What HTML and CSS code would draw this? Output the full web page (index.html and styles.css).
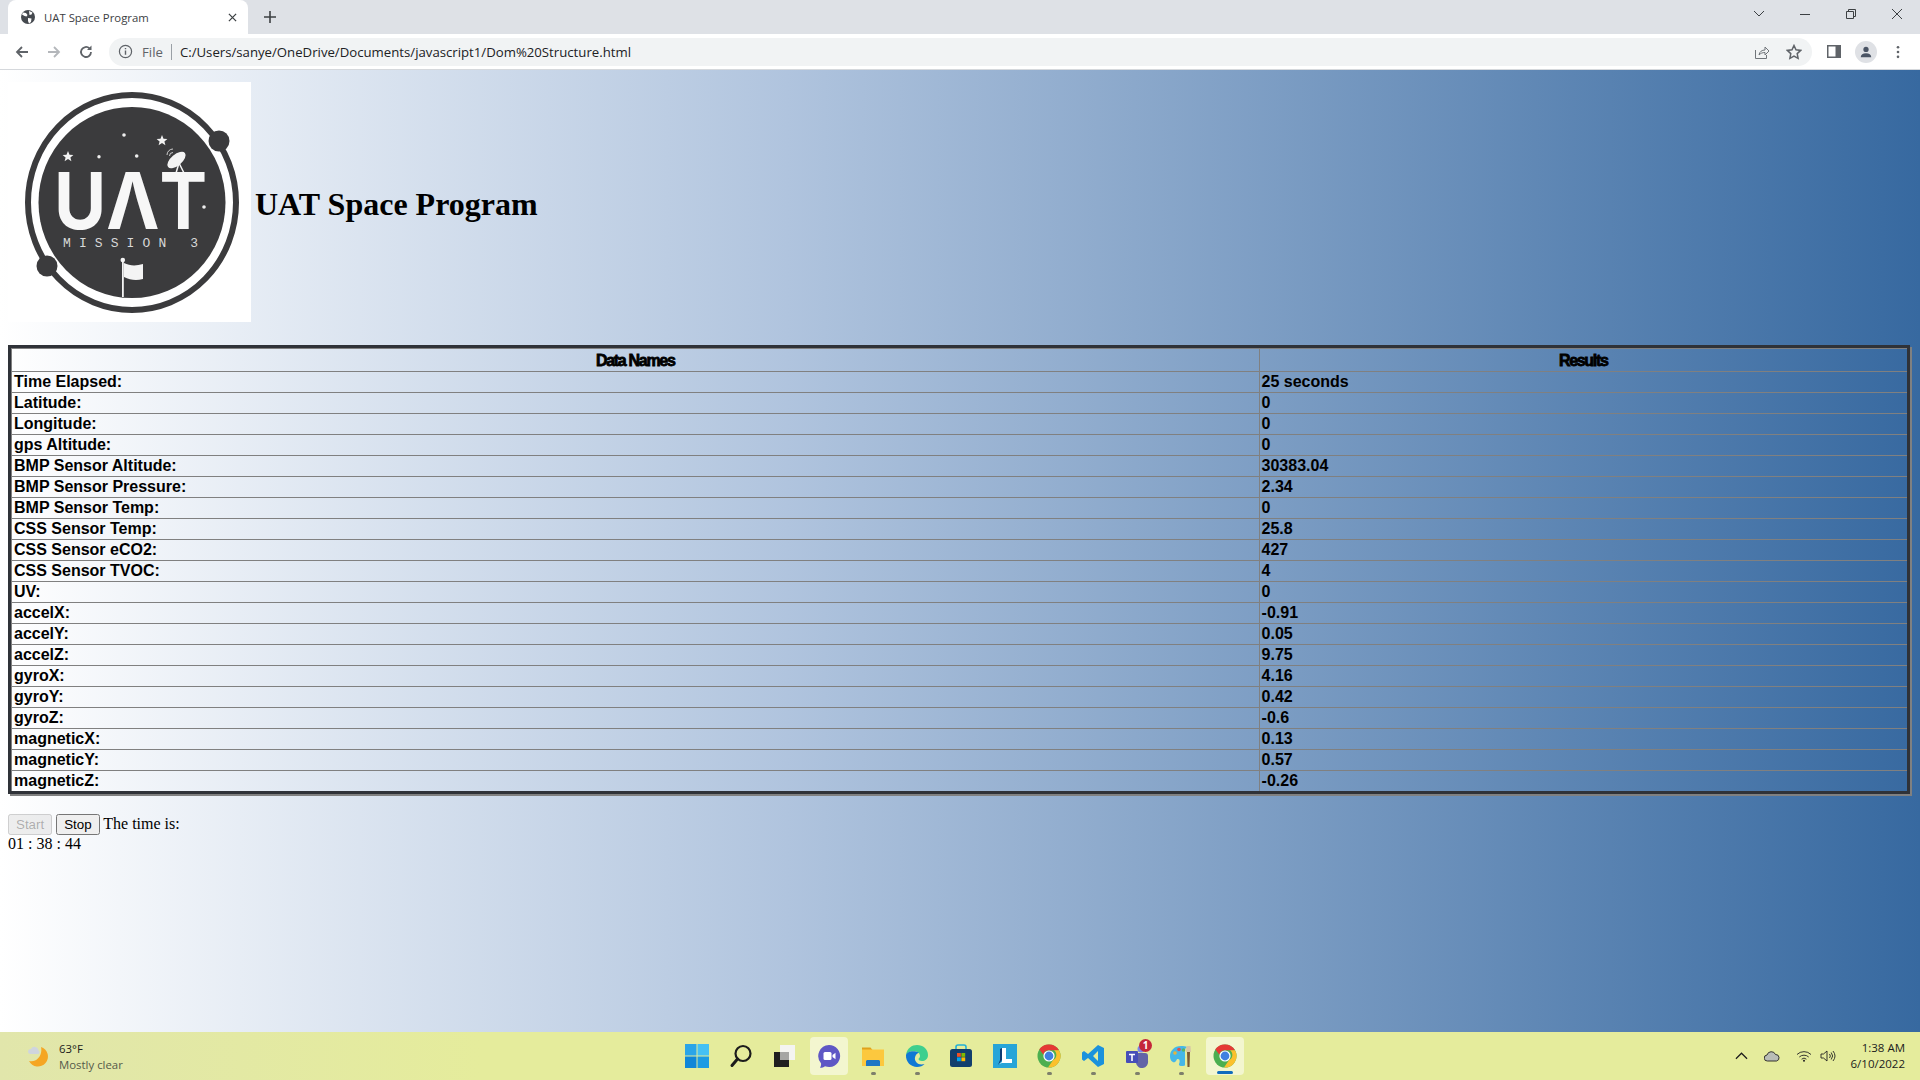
FILE: index.html
```html
<!DOCTYPE html>
<html lang="en">
<head>
<meta charset="utf-8">
<title>UAT Space Program</title>
<link rel="stylesheet" href="styles.css">
</head>
<body>
<svg class="defs" width="0" height="0" aria-hidden="true">
  <symbol id="chrome" viewBox="0 0 24 24">
    <circle cx="12" cy="12" r="11.5" fill="#4caf50"/>
    <path d="M12 .5a11.5 11.5 0 0 1 10 5.75H12a5.75 5.75 0 0 0-5.6 4.4L2.3 5.2A11.5 11.5 0 0 1 12 .5z" fill="#e53935"/>
    <path d="M22 6.25A11.5 11.5 0 0 1 11 23.45l5.1-7.4a5.75 5.75 0 0 0 .9-9.8z" fill="#fbc02d"/>
    <circle cx="12" cy="12" r="5.6" fill="#fff"/>
    <circle cx="12" cy="12" r="4.4" fill="#3f80e0"/>
  </symbol>
</svg>

<header class="chrome">
  <div class="tabstrip">
    <div class="tab">
      <svg class="favicon" viewBox="0 0 16 16"><circle cx="8" cy="8" r="7" fill="#45494f"/><path d="M3 3.5l3 .5 1.500 2-1 1.500-2-.5-2.500-1.500zM9 2l3.500 1.500-1 2L9.500 6zM8 9l3.500.5L11 13l-2 1.500-1-2.500z" fill="#fff"/></svg>
      <span class="tab-title">UAT Space Program</span>
      <svg class="tab-close" viewBox="0 0 10 10"><path d="M1 1l8 8M9 1l-8 8" stroke="#3c4043" stroke-width="1.400"/></svg>
    </div>
    <svg class="newtab" viewBox="0 0 12 12"><path d="M6 0v12M0 6h12" stroke="#3c4043" stroke-width="1.600"/></svg>
    <div class="winctl">
      <svg class="wc" viewBox="0 0 46 20"><path d="M18 7l5 5 5-5" fill="none" stroke="#3c4043"/></svg>
      <svg class="wc" viewBox="0 0 46 20"><path d="M18 10.500h10" stroke="#3c4043"/></svg>
      <svg class="wc" viewBox="0 0 46 20"><path d="M18.500 7.500h7v7h-7zM20.500 7.500v-2h7v7h-2" fill="none" stroke="#3c4043"/></svg>
      <svg class="wc" viewBox="0 0 46 20"><path d="M18 5l10 10M28 5L18 15" stroke="#3c4043"/></svg>
    </div>
  </div>
  <div class="toolbar">
    <svg class="navbtn" viewBox="0 0 16 16"><path d="M14 8H3M8 3L3 8l5 5" fill="none" stroke="#5f6368" stroke-width="1.800"/></svg>
    <svg class="navbtn" viewBox="0 0 16 16"><path d="M2 8h11M8 3l5 5-5 5" fill="none" stroke="#b4b7bb" stroke-width="1.800"/></svg>
    <svg class="navbtn" viewBox="0 0 16 16"><path d="M13 8a5 5 0 1 1-1.500-3.600" fill="none" stroke="#5f6368" stroke-width="1.800"/><path d="M13.500 1.500v4.500H9z" fill="#5f6368"/></svg>
    <div class="omnibox">
      <svg class="info" viewBox="0 0 16 16"><circle cx="8" cy="8" r="6.500" fill="none" stroke="#5f6368" stroke-width="1.300"/><path d="M8 7v4.500M8 4.200v1.500" stroke="#5f6368" stroke-width="1.500"/></svg>
      <span class="scheme">File</span>
      <span class="sep"></span>
      <span class="url">C:/Users/sanye/OneDrive/Documents/javascript1/Dom%20Structure.html</span>
      <svg class="omni-ic share" viewBox="0 0 16 16"><path d="M1.500 6v8.500h11V11" fill="none" stroke="#70757a"/><path d="M5 11c.5-3.500 3-5 6-5V3l4 4-4 4V8.500c-2.500 0-4.500.8-6 2.500z" fill="none" stroke="#70757a"/></svg>
      <svg class="omni-ic" viewBox="0 0 16 16"><path d="M8 1.500l2 4.300 4.700.6-3.500 3.200.9 4.700L8 12l-4.100 2.300.9-4.700L1.300 6.400 6 5.800z" fill="none" stroke="#5f6368" stroke-width="1.500"/></svg>
    </div>
    <svg class="panel" viewBox="0 0 14 13"><rect width="14" height="13" fill="#5f6368"/><rect x="1.500" y="1.500" width="7" height="10" fill="#fff"/></svg>
    <div class="avatar"><svg viewBox="0 0 16 16"><circle cx="8" cy="5" r="3" fill="#4a5464"/><path d="M2 14c0-3 2.500-4.500 6-4.500s6 1.500 6 4.500z" fill="#4a5464"/></svg></div>
    <svg class="dots" viewBox="0 0 4 16"><circle cx="2" cy="2.500" r="1.500" fill="#5f6368"/><circle cx="2" cy="8" r="1.500" fill="#5f6368"/><circle cx="2" cy="13.500" r="1.500" fill="#5f6368"/></svg>
  </div>
</header>

<main class="page">
  <div class="masthead">
    <svg class="logo" viewBox="0 0 243 240" role="img" aria-label="UAT Mission 3 logo">
      <rect width="243" height="240" fill="#fff"/>
      <ellipse cx="124" cy="120.500" rx="104" ry="107.500" fill="none" stroke="#3b3b3d" stroke-width="6"/>
      <ellipse cx="124" cy="120.500" rx="93.500" ry="95.500" fill="#3b3b3d"/>
      <circle cx="211" cy="59" r="10.500" fill="#3b3b3d"/>
      <circle cx="39" cy="184" r="10.500" fill="#3b3b3d"/>
      <path d="M60 69l1.500 3.700 3.900.2-3 2.500 1 3.800-3.400-2.100-3.400 2.100 1-3.800-3-2.500 3.900-.2zM154 53l1.500 3.700 3.900.2-3 2.500 1 3.800-3.400-2.100-3.400 2.100 1-3.800-3-2.500 3.900-.2z" fill="#f2f2f2"/>
      <circle cx="116" cy="53" r="1.800" fill="#eee"/><circle cx="91" cy="74.700" r="1.700" fill="#eee"/><circle cx="128.700" cy="74" r="1.800" fill="#eee"/><circle cx="196" cy="125" r="1.800" fill="#eee"/>
      <ellipse cx="168.500" cy="78" rx="11" ry="5.500" transform="rotate(-40 168.500 78)" fill="#f4f4f4"/>
      <path d="M171 81l-3 10M171 81l5 10" fill="none" stroke="#f4f4f4" stroke-width="1.500"/>
      <path d="M159 73a6 6 0 0 1 6-6M161.500 74a3.500 3.500 0 0 1 3.500-3.500" fill="none" stroke="#ddd" stroke-width=".9"/>
      <text class="logo-mark" x="46" y="147" textLength="153" lengthAdjust="spacingAndGlyphs">UΛT</text>
      <text class="logo-sub" x="55" y="164.500" textLength="135">MISSION 3</text>
      <path d="M114 178h1.800v37H114z" fill="#f4f4f4"/>
      <circle cx="114.800" cy="178" r="2.300" fill="#f4f4f4"/>
      <path d="M116 181c6 3 12 3 19 1v15c-7 2-13 1-19-2z" fill="#f4f4f4"/>
    </svg>
    <h1 class="title">UAT Space Program</h1>
  </div>

  <div class="table-wrap">
    <table class="data">
      <thead>
        <tr><th class="col-name">Data Names</th><th>Results</th></tr>
      </thead>
      <tbody>
        <tr><td>Time Elapsed:</td><td>25 seconds</td></tr>
        <tr><td>Latitude:</td><td>0</td></tr>
        <tr><td>Longitude:</td><td>0</td></tr>
        <tr><td>gps Altitude:</td><td>0</td></tr>
        <tr><td>BMP Sensor Altitude:</td><td>30383.04</td></tr>
        <tr><td>BMP Sensor Pressure:</td><td>2.34</td></tr>
        <tr><td>BMP Sensor Temp:</td><td>0</td></tr>
        <tr><td>CSS Sensor Temp:</td><td>25.8</td></tr>
        <tr><td>CSS Sensor eCO2:</td><td>427</td></tr>
        <tr><td>CSS Sensor TVOC:</td><td>4</td></tr>
        <tr><td>UV:</td><td>0</td></tr>
        <tr><td>accelX:</td><td>-0.91</td></tr>
        <tr><td>accelY:</td><td>0.05</td></tr>
        <tr><td>accelZ:</td><td>9.75</td></tr>
        <tr><td>gyroX:</td><td>4.16</td></tr>
        <tr><td>gyroY:</td><td>0.42</td></tr>
        <tr><td>gyroZ:</td><td>-0.6</td></tr>
        <tr><td>magneticX:</td><td>0.13</td></tr>
        <tr><td>magneticY:</td><td>0.57</td></tr>
        <tr><td>magneticZ:</td><td>-0.26</td></tr>
      </tbody>
    </table>
  </div>

  <div class="clock">
    <div class="clock-row"><button disabled>Start</button> <button>Stop</button> The time is:</div>
    <div>01 : 38 : 44</div>
  </div>
</main>

<footer class="taskbar">
  <div class="weather">
    <svg class="moon" viewBox="0 0 24 24">
      <path d="M14 3a10 10 0 1 1-12 14c7 2 14-5 12-14z" fill="#f5a623"/>
      <path d="M1 8a3 3 0 0 1 3-3 4 4 0 0 1 7.500 1.500 2 2 0 0 1 0 3.500H3a2.500 2.500 0 0 1-2-2z" fill="#cfd5de"/>
    </svg>
    <div class="weather-text"><span class="temp">63°F</span><span class="cond">Mostly clear</span></div>
  </div>
  <div class="apps">
    <div class="app"><svg viewBox="0 0 24 24"><rect x="0" y="0" width="11.500" height="11.500" fill="#2aa5e8"/><rect x="12.500" y="0" width="11.500" height="11.500" fill="#45c1f4"/><rect x="0" y="12.500" width="11.500" height="11.500" fill="#0f86d8"/><rect x="12.500" y="12.500" width="11.500" height="11.500" fill="#1c9be3"/></svg></div>
    <div class="app"><svg viewBox="0 0 24 24"><circle cx="14" cy="9.500" r="7.500" fill="none" stroke="#1c1c1c" stroke-width="2.200"/><path d="M8.500 15L3 21.500" stroke="#1c1c1c" stroke-width="3" stroke-linecap="round"/></svg></div>
    <div class="app"><svg viewBox="0 0 24 24"><rect x="7" y="1" width="15" height="15" fill="#f4f4f0"/><rect x="1" y="8" width="15" height="15" fill="#1f1f1f"/><rect x="7" y="8" width="9" height="8" fill="#a5a5a3"/></svg></div>
    <div class="app app-on"><svg viewBox="0 0 24 24"><path d="M12 1a11 11 0 1 1-4 21.200c-1.500 1-3 1.500-5 1.500 1-1.500 1.300-3 1-4.500A11 11 0 0 1 12 1z" fill="#5f57c5"/><rect x="6.500" y="8" width="8" height="8" rx="1.500" fill="#fff"/><path d="M15.500 11l3-2.200v6.400l-3-2.200z" fill="#fff"/></svg></div>
    <div class="app running"><svg viewBox="0 0 24 24"><path d="M1 3.500h8.500l2 2.500H1z" fill="#e0a21c"/><path d="M1 5.500h22V22H1z" fill="#fcc83e"/><path d="M6 16h12l1 1v5H5v-5z" fill="#1d76c4"/></svg></div>
    <div class="app running"><svg viewBox="0 0 24 24"><path d="M1 11C2 4 7 1 12 1c6 0 11 4 11 10 0 4-3 6-6 6-2 0-3.500-1-3.500-2 0-1 1.500-1 1.500-3 0-3-3-5-6.500-5S2 9 1 11z" fill="#3ecf8e"/><path d="M1 11c-.5 7 5 12 11 12 3 0 6-1 7.500-3-3 1-7.500.5-9-3-1.500-3 0-7 3.500-8.500C9 6 2 7 1 11z" fill="#0f78d4"/></svg></div>
    <div class="app"><svg viewBox="0 0 24 24"><path d="M7 6V3a2 2 0 0 1 2-2h6a2 2 0 0 1 2 2v3" fill="none" stroke="#23b0d6" stroke-width="1.600"/><rect x="1" y="5" width="22" height="18" rx="2.500" fill="#123f6d"/><rect x="8" y="9" width="3.800" height="3.800" fill="#f25022"/><rect x="12.400" y="9" width="3.800" height="3.800" fill="#7fba00"/><rect x="8" y="13.400" width="3.800" height="3.800" fill="#00a4ef"/><rect x="12.400" y="13.400" width="3.800" height="3.800" fill="#ffb900"/></svg></div>
    <div class="app"><svg viewBox="0 0 24 24"><rect width="24" height="24" fill="#27a5d8"/><path d="M6 20l3-2V4h4v11h6v4H9z" fill="#fff"/><path d="M5 21l4-5V4L7 5v11z" fill="#0f3c74"/></svg></div>
    <div class="app running"><svg viewBox="0 0 24 24"><use href="#chrome"/></svg></div>
    <div class="app running"><svg viewBox="0 0 24 24"><path d="M17 1l6 3v16l-6 3L7 14l-4 3-2-1.500v-7L3 7l4 3zM17 7l-5 5 5 5z" fill="#1b92dc"/></svg></div>
    <div class="app running badge-host"><svg viewBox="0 0 24 24"><circle cx="16" cy="5" r="3.500" fill="#7b83eb"/><path d="M8 9h12a3 3 0 0 1 3 3v5a6 6 0 0 1-12 2 5 5 0 0 1-3-4z" fill="#6264a7"/><rect x="1" y="7" width="12" height="12" rx="1" fill="#464eb8"/><path d="M4 9.800h6v1.500H7.800V17H6.200v-5.700H4z" fill="#fff"/></svg><span class="badge">1</span></div>
    <div class="app running"><svg viewBox="0 0 24 24"><path d="M12 2C5 2 1 7 1 12c0 5 3 7 5 6s1-3 3-3 2 3 1 5c-.5 1.500 1 2 3 2 1.500 0 3-.5 3-.5V5l2-2c-1.500-.7-3.500-1-6-1z" fill="#45b7e8"/><circle cx="6" cy="9" r="1.800" fill="#e8b43a"/><circle cx="10" cy="5.500" r="1.800" fill="#e0524d"/><circle cx="14.500" cy="6" r="1.800" fill="#58b368"/><path d="M18 8h3l-.5 15h-2z" fill="#7a5a32"/><path d="M17.500 2h4l.5 6h-5z" fill="#d8c7a4"/></svg></div>
    <div class="app app-on active"><svg viewBox="0 0 24 24"><use href="#chrome"/></svg></div>
  </div>
  <div class="tray">
    <svg class="tray-ic chev" viewBox="0 0 14 8"><path d="M1 7l6-6 6 6" fill="none" stroke="#1b1b1b" stroke-width="1.300"/></svg>
    <svg class="tray-ic cloud" viewBox="0 0 16 10"><path d="M3.500 9.500a3 3 0 0 1-.5-6A4.500 4.500 0 0 1 11.500 3a3.300 3.300 0 0 1 1 6.500z" fill="#b9bdb6" stroke="#222" stroke-width=".9"/></svg>
    <svg class="tray-ic wifi" viewBox="0 0 16 12"><path d="M1 4.500a10 10 0 0 1 14 0M3.300 7a7 7 0 0 1 9.400 0M5.600 9.200a3.500 3.500 0 0 1 4.800 0" fill="none" stroke="#222" stroke-width=".9"/><circle cx="8" cy="10.800" r="1" fill="#222"/></svg>
    <svg class="tray-ic vol" viewBox="0 0 16 12"><path d="M1 4h2.500L7 1v10L3.500 8H1z" fill="none" stroke="#222" stroke-width=".9"/><path d="M9.500 4a3 3 0 0 1 0 4M11.200 2.500a5.500 5.500 0 0 1 0 7M13 1a8 8 0 0 1 0 10" fill="none" stroke="#222" stroke-width=".9"/></svg>
    <div class="datetime"><span>1:38 AM</span><span>6/10/2022</span></div>
  </div>
</footer>
</body>
</html>
```
FILE: styles.css
```css
* { box-sizing: border-box; }
html, body { height: 100%; }
body {
  margin: 0;
  height: 1080px;
  display: flex;
  flex-direction: column;
  overflow: hidden;
  font-family: "Liberation Serif", serif;
  font-size: 16px;
  color: #000;
}
.defs { position: absolute; }

/* browser chrome */
.chrome { flex: none; height: 70px; font-family: "Open Sans", "Noto Sans", sans-serif; color: #3c4043; }
.tabstrip { height: 34px; background: #dee1e6; display: flex; align-items: stretch; padding-left: 8px; }
.tab {
  width: 240px;
  background: #fff;
  border-radius: 8px 8px 0 0;
  display: flex;
  align-items: center;
  padding: 0 11px 0 12px;
}
.favicon { width: 16px; height: 16px; flex: none; }
.tab-title { margin-left: 8px; font-size: 11.350px; flex: 1; white-space: nowrap; }
.tab-close { width: 9px; height: 9px; flex: none; }
.newtab { width: 12px; height: 12px; align-self: center; margin-left: 16px; flex: none; }
.winctl { margin-left: auto; display: flex; align-items: center; margin-top: -6px; }
.wc { width: 46px; height: 20px; display: block; }
.toolbar {
  height: 36px;
  background: #fff;
  border-bottom: 1px solid #d5d8dc;
  display: flex;
  align-items: center;
  padding: 0 14px;
}
.navbtn { width: 16px; height: 16px; flex: none; margin-right: 16px; }
.omnibox {
  width: 1703px;
  height: 28px;
  background: #f1f3f4;
  border-radius: 14px;
  display: flex;
  align-items: center;
  padding: 0 10px 0 9px;
  font-size: 13.200px;
  margin-left: -1px;
}
.info { width: 15px; height: 15px; flex: none; }
.scheme { margin-left: 9px; color: #5f6368; }
.sep { width: 1px; height: 16px; background: #9aa0a6; margin: 0 8px; }
.url { color: #202124; white-space: nowrap; flex: 1; }
.omni-ic { width: 16px; height: 16px; flex: none; margin-left: 16px; }
.panel { width: 14px; height: 13px; flex: none; margin-left: 15px; }
.avatar { width: 22px; height: 22px; border-radius: 50%; background: #dfe1e5; margin-left: 14px; flex: none; display: flex; align-items: center; justify-content: center; }
.avatar svg { width: 14px; height: 14px; }
.dots { width: 4px; height: 14px; flex: none; margin-left: 19px; }

/* page */
.page {
  flex: 1;
  min-height: 0;
  padding: 12px 8px 0;
  background: linear-gradient(to right, #fff 0%, #b0c4de 41%, #3769a0 100%);
}
.masthead { display: flex; align-items: center; gap: 4px; }
.logo { width: 243px; height: 240px; flex: none; display: block; }
.logo-mark { font-family: Inter, "Liberation Sans", sans-serif; font-weight: 700; font-size: 78px; fill: #f7f7f7; }
.logo-sub { font-family: "Liberation Mono", monospace; font-size: 13px; fill: #d8d8d8; }
.title { margin: 4px 0 0; font-size: 32px; font-weight: 700; font-family: "Liberation Serif", serif; }

.table-wrap { margin-top: 23px; padding-right: 2px; }
.data {
  width: 100%;
  table-layout: fixed;
  border-collapse: separate;
  border-spacing: 0;
  border: 3px solid #2f3238;
  box-shadow: 2px 2px 0 #808080;
  font-family: "Liberation Sans", sans-serif;
  font-weight: 700;
  font-size: 16px;
}
.data th, .data td {
  padding: 0 2px;
  height: 21px;
  line-height: 20px;
  border-bottom: 1px solid #808080;
  border-left: 1px solid #808080;
  text-align: left;
  white-space: nowrap;
}
.data tbody tr:last-child td { border-bottom: 0; height: 20px; }
.data th {
  height: 24px;
  padding-top: 2px;
  border-top: 1px solid #808080;
  text-align: center;
  font-size: 16px;
  letter-spacing: -1.300px;
  -webkit-text-stroke: .8px #000;
}
.col-name { width: 65.800%; }

.clock { margin-top: 20px; line-height: 18px; }
.clock-row { min-height: 21px; }
.clock button { font-family: "Liberation Sans", sans-serif; font-size: 13.333px; }

/* taskbar */
.taskbar {
  flex: none;
  height: 48px;
  background: linear-gradient(to right, #e1e6ab 0%, #e5ec9c 25%, #e5ec9c 100%);
  display: flex;
  align-items: center;
  font-family: "Open Sans", "Noto Sans", sans-serif;
  color: #1b1b1b;
}
.weather { width: 675px; flex: none; display: flex; align-items: center; padding-left: 27px; }
.moon { width: 24px; height: 24px; flex: none; }
.weather-text { display: flex; flex-direction: column; margin-left: 8px; padding-top: 2px; font-size: 11.400px; line-height: 16px; }
.cond { color: #555a4a; }
.apps { display: flex; flex: none; }
.app { width: 44px; height: 38px; display: flex; align-items: center; justify-content: center; position: relative; }
.app svg { width: 24px; height: 24px; position: relative; z-index: 1; }
.app-on::before { content: ""; position: absolute; left: 3px; right: 3px; top: 0; bottom: 0; background: #f3f6cf; border-radius: 4px; z-index: 0; }
.running::after { content: ""; position: absolute; left: 20px; bottom: 0; width: 5px; height: 3px; border-radius: 2px; background: #7d7f6b; }
.active::after { content: ""; position: absolute; left: 14px; bottom: 1px; width: 16px; height: 3px; border-radius: 2px; background: #0f6cbd; z-index: 2; }
.badge {
  position: absolute; z-index: 2; left: 24px; top: 2px;
  width: 13px; height: 13px; border-radius: 50%;
  background: #c4263a; color: #fff;
  font-size: 10px; font-weight: 700; line-height: 13px; text-align: center;
}
.tray { margin-left: auto; display: flex; align-items: center; padding-right: 15px; }
.tray-ic { flex: none; }
.chev { width: 13px; height: 8px; }
.cloud { width: 16px; height: 11px; margin-left: 16px; }
.wifi { width: 16px; height: 12px; margin-left: 16px; }
.vol { width: 16px; height: 12px; margin-left: 8px; }
.datetime { display: flex; flex-direction: column; align-items: flex-end; margin-left: 15px; font-size: 11.500px; line-height: 16px; }
```
